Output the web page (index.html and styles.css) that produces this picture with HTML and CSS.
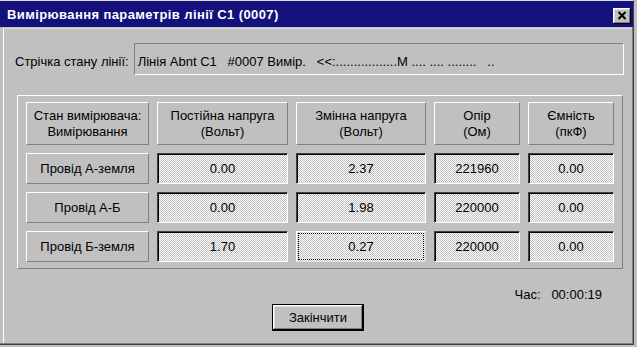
FILE: index.html
```html
<!DOCTYPE html>
<html lang="uk">
<head>
  <meta charset="UTF-8">
  <title>Вимірювання параметрів лінії С1 (0007)</title>
  <link rel="stylesheet" href="styles.css">
</head>
<body>
  <div class="window">
    <div class="titlebar">
      <span class="title">Вимірювання параметрів лінії С1 (0007)</span>
      <button class="close" title="Закрити">
        <svg width="10" height="9" viewBox="0 0 10 9">
          <path d="M1.5 1 L8.5 8 M8.5 1 L1.5 8" stroke="#000" stroke-width="2" fill="none"/>
        </svg>
      </button>
    </div>

    <div class="content">
      <div class="status">
        <span class="status-label">Стрічка стану лінії:</span>
        <div class="status-field">Лінія Abnt C1   #0007 Вимір.   &lt;&lt;:.................M .... .... ........   ..</div>
      </div>

      <div class="panel">
        <div class="grid">
          <div class="cell head">Стан вимірювача:<br>Вимірювання</div>
          <div class="cell head">Постійна напруга<br>(Вольт)</div>
          <div class="cell head">Змінна напруга<br>(Вольт)</div>
          <div class="cell head">Опір<br>(Ом)</div>
          <div class="cell head">Ємність<br>(пкФ)</div>

          <div class="cell head">Провід А-земля</div>
          <div class="cell value">0.00</div>
          <div class="cell value">2.37</div>
          <div class="cell value">221960</div>
          <div class="cell value">0.00</div>

          <div class="cell head">Провід А-Б</div>
          <div class="cell value">0.00</div>
          <div class="cell value">1.98</div>
          <div class="cell value">220000</div>
          <div class="cell value">0.00</div>

          <div class="cell head">Провід Б-земля</div>
          <div class="cell value">1.70</div>
          <div class="cell value focused">0.27</div>
          <div class="cell value">220000</div>
          <div class="cell value">0.00</div>
        </div>
      </div>

      <div class="footer">
        <div class="time">Час:   00:00:19</div>
        <button class="btn">Закінчити</button>
      </div>
    </div>
  </div>
</body>
</html>
```

FILE: styles.css
```css
body {
  margin: 0;
  background: #c0c0c0;
  font-family: "Liberation Sans", Arial, sans-serif;
  font-size: 13px;
  color: #000;
}
.window {
  width: 634px;
  height: 345px;
  box-sizing: border-box;
  background: #c0c0c0;
  border-top: 1px solid #dfdfdf;
  border-right: 1px solid #404040;
  border-bottom: 1px solid #404040;
  box-shadow: inset -1px -1px #808080;
  display: flex;
  flex-direction: column;
}
.titlebar {
  height: 26px;
  background: #14107c;
  color: #fff;
  display: flex;
  align-items: center;
  justify-content: space-between;
  padding: 0 2px 0 7px;
}
.title {
  font-weight: bold;
  font-size: 13px;
  letter-spacing: 0.4px;
}
.close {
  width: 18px;
  height: 16px;
  margin-top: 3px;
  padding: 0;
  border: none;
  background: #c0c0c0;
  box-shadow: inset -1px -1px #000, inset 1px 1px #fff, inset -2px -2px #808080, inset 2px 2px #dfdfdf;
  display: flex;
  align-items: center;
  justify-content: center;
}
.content {
  flex: 1;
  margin: 1px 1px 1px 3px;
  border-left: 1px solid #fff;
  border-top: 1px solid #dfdfdf;
  display: flex;
  flex-direction: column;
}
.status {
  display: flex;
  align-items: center;
  gap: 5px;
  padding: 14px 8px 0 11px;
}
.status-label {
  padding-top: 5px;
  white-space: pre;
}
.status-field {
  flex: 1;
  height: 32px;
  box-sizing: border-box;
  border: 1px solid;
  border-color: #808080 #fff #fff #808080;
  padding: 5px 0 0 3px;
  display: flex;
  align-items: center;
  white-space: pre;
}
.panel {
  align-self: flex-start;
  margin: 20px 0 0 13px;
  padding: 6px 8px 6px 8px;
  border: 1px solid;
  border-color: #fff #808080 #808080 #fff;
}
.grid {
  display: grid;
  grid-template-columns: 123px 131px 130px 86px 86px;
  grid-template-rows: 43px 31px 31px 31px;
  gap: 8px;
}
.cell {
  box-sizing: border-box;
  display: flex;
  align-items: center;
  justify-content: center;
  text-align: center;
  line-height: 16px;
}
.head {
  border: 1px solid;
  border-color: #fff #808080 #808080 #fff;
}
.value {
  border: 1px solid;
  border-color: #404040 #fff #fff #404040;
  box-shadow: inset 1px 1px #000, inset -1px -1px #dfdfdf;
  background: repeating-conic-gradient(#c0c0c0 0 25%, #fff 0 50%) 0 0 / 2px 2px;
}
.value.focused {
  border-color: #fff #dfdfdf #dfdfdf #fff;
  box-shadow: none;
  outline: 1px dotted #000;
  outline-offset: -3px;
}
.footer {
  display: flex;
  flex-direction: column;
  margin-top: 18px;
}
.time {
  align-self: flex-end;
  padding-right: 30px;
  line-height: 16px;
  white-space: pre;
}
.btn {
  align-self: center;
  margin-top: 1px;
  width: 92px;
  height: 27px;
  border: 1px solid #000;
  background: #c0c0c0;
  box-shadow: inset -1px -1px #000, inset 1px 1px #fff, inset -2px -2px #808080, inset 2px 2px #dfdfdf;
  font-family: inherit;
  font-size: 13px;
  color: #000;
  padding: 0;
}
```
